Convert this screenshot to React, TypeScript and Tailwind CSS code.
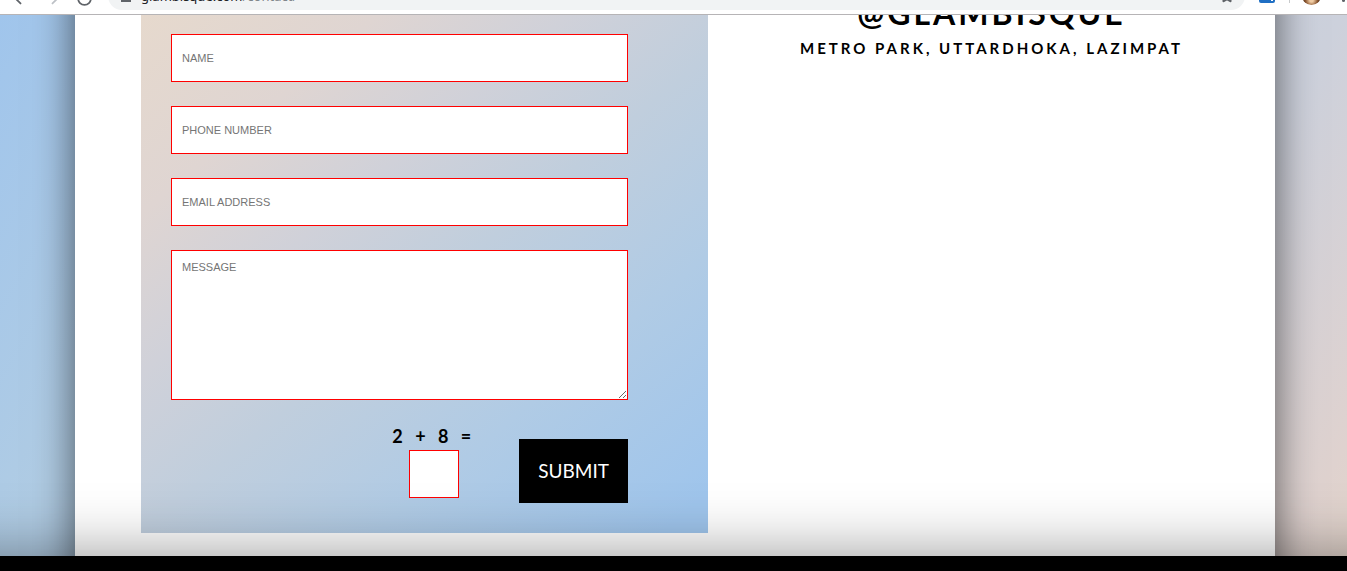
import { Star, ArrowLeft, ArrowRight, RotateCw } from "lucide-react";

const field =
  "block w-full rounded-none border border-[#ff0000] bg-white px-[10px] text-[11px] text-[#4e4e4e] placeholder:text-[#757575] outline-none font-['Liberation_Sans',Arial,sans-serif]";

const fields = [
  { id: "name", label: "NAME", type: "text" },
  { id: "phone", label: "PHONE NUMBER", type: "tel" },
  { id: "email", label: "EMAIL ADDRESS", type: "email" },
];

function BrowserBar() {
  return (
    <header className="flex h-[15px] items-end overflow-hidden border-b border-[#b6b4b6] bg-white">
      <nav className="flex h-6 shrink-0 items-start pl-[12px] text-[#5f6368]">
        <button type="button" aria-label="Back" className="w-8">
          <ArrowLeft size={17} strokeWidth={2.5} />
        </button>
        <button type="button" aria-label="Forward" className="w-8 text-[#bdc1c6]">
          <ArrowRight size={17} strokeWidth={2.5} />
        </button>
        <button type="button" aria-label="Reload" className="w-8">
          <RotateCw size={17} strokeWidth={2.5} />
        </button>
      </nav>
      <div className="mb-[4px] flex h-7 flex-1 items-center rounded-full bg-[#f1f3f4] pr-[11px] pl-[13px]">
        <svg width="10" height="14" viewBox="0 0 10 14" fill="#5f6368">
          <path d="M0 6h10v7H0zM2 6V3a3 3 0 0 1 6 0v3H7V3a2 2 0 0 0-4 0v3z" />
        </svg>
        <span className="ml-[10px] flex-1 font-['Noto_Sans',sans-serif] text-[13px] leading-5 text-[#202124]">
          glambisque.com<span className="text-[#80868b]">/contact/</span>
        </span>
        <Star size={14} strokeWidth={3} className="text-[#5f6368]" />
      </div>
      <div className="flex h-7 shrink-0 items-start pr-[2px] pl-[14px]">
        <span className="mt-[1px] flex h-4 w-4 items-end justify-end rounded-[2px] bg-[#1f6fc4] p-[2px]">
          <span className="h-[2px] w-[2px] bg-white" />
        </span>
        <span className="ml-[14px] h-[17px] w-px bg-[#c8cacc]" />
        <span className="ml-[12px] h-[19px] w-[19px] rounded-full bg-[radial-gradient(circle_at_50%_75%,#f0cba2_10%,#8a5630_35%,#2a1a12_60%)]" />
        <span className="mt-[13px] ml-[21px] h-[3px] w-[3px] rounded-full bg-[#5f6368]" />
      </div>
    </header>
  );
}

export default function App() {
  return (
    <div className="min-h-screen overflow-hidden bg-black font-[Lato,sans-serif] text-black">
      <BrowserBar />
      <main className="relative overflow-hidden bg-[linear-gradient(120deg,#a0c5ec_0%,#b0cce4_19%,#cdd1dc_81%,#dfd2cf_96%,#e2d4cb_100%)] pr-[72px] pl-[75px]">
        <div className="-my-12 grid grid-cols-2 bg-white pt-12 pb-[71px] pl-[66px] shadow-[0_0_38px_rgba(0,0,0,0.6)]">
          <form
            className="bg-[linear-gradient(140deg,#e6d9cd_0%,#dfd5d2_20%,#d0d1d9_36%,#c0cedd_52%,#b0cbe5_72%,#9fc5ec_96%)] pt-[19px] pr-20 pb-[30px] pl-[30px]"
            onSubmit={(e) => e.preventDefault()}
          >
            <div className="flex flex-col gap-6">
              {fields.map((f) => (
                <input key={f.id} id={f.id} type={f.type} aria-label={f.label} placeholder={f.label} className={`${field} h-12`} />
              ))}
              <textarea aria-label="MESSAGE" placeholder="MESSAGE" className={`${field} h-[150px] resize py-[10px] leading-3`} />
            </div>
            <div className="mt-6 flex items-end justify-end">
              <div className="mr-[44px] flex flex-col items-center gap-[2px] pb-[5px]">
                <label htmlFor="sum" className="text-lg leading-6 font-bold tracking-[4px] whitespace-pre">
                  2 + 8 =
                </label>
                <input id="sum" type="text" className={`${field} h-12 max-w-[50px]`} />
              </div>
              <button type="submit" className="h-16 bg-black px-[19px] text-[19px] text-white">
                SUBMIT
              </button>
            </div>
          </form>
          <section className="text-center">
            <h2 className="-mt-[22px] text-[32px] leading-10 font-bold tracking-[3px]">@GLAMBISQUE</h2>
            <p className="mt-[5px] text-[15px] leading-5 font-bold tracking-[3px]">METRO PARK, UTTARDHOKA, LAZIMPAT</p>
          </section>
        </div>
      </main>
      <footer className="relative h-4 bg-black shadow-[0_100px_60px_100px_rgba(0,0,0,0.42)]" />
    </div>
  );
}
